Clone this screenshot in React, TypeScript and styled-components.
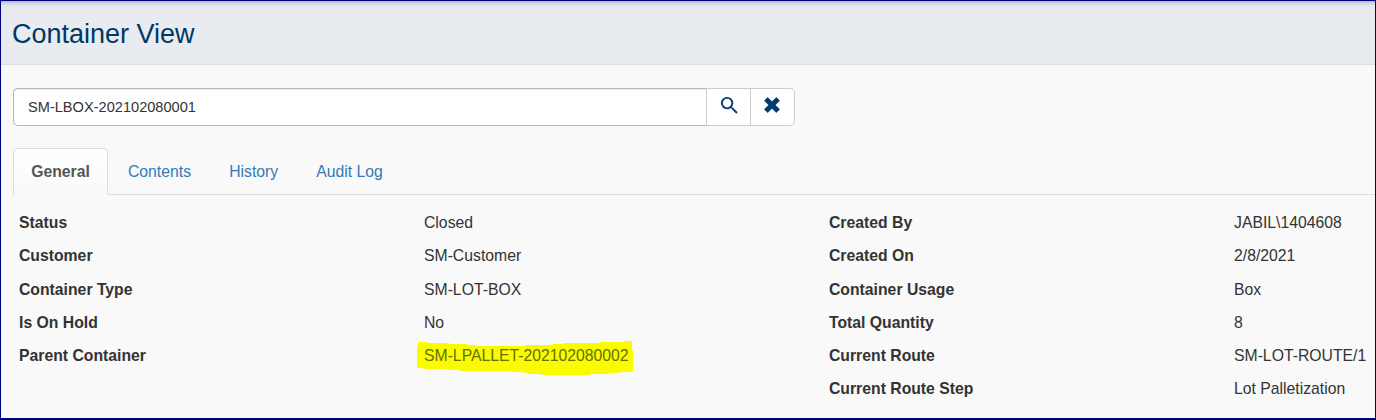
import React from 'react';
import styled, { createGlobalStyle } from 'styled-components';

const GlobalStyle = createGlobalStyle`
  * { box-sizing: border-box; }
  body {
    margin: 0;
    background: #f9f9f9;
    color: #333;
    font-family: "Liberation Sans", Arial, sans-serif;
    font-size: 15.75px;
  }
`;

const Page = styled.div`
  width: 1376px;
  height: 420px;
  overflow: hidden;
  border-bottom: 1px solid #000;
`;

const Frame = styled.div`
  display: flex;
  flex-direction: column;
  height: 419px;
  overflow: hidden;
  background: #f9f9f9;
  border: 1px solid #000080;
`;

const Header = styled.header`
  display: flex;
  align-items: center;
  flex: none;
  height: 64px;
  padding: 2px 0 0 11px;
  background: linear-gradient(#b4b7bd, #cfd2d8 2px, #dfe2e7 4px, #e8ebf0 7px);
  border-bottom: 1px solid #d9dfe8;
`;

const Title = styled.h1`
  margin: 0;
  color: #003865;
  font-size: 27px;
  font-weight: 400;
  line-height: 32px;
`;

const SearchGroup = styled.div`
  display: flex;
  flex: none;
  width: 782px;
  height: 38px;
  margin: 23px 0 22px 12px;
`;

const SearchInput = styled.input`
  flex: 1;
  min-width: 0;
  padding: 0 14px;
  border: 1px solid #b5b5b5;
  border-right-color: #ccc;
  border-radius: 5px 0 0 5px;
  background: #fff;
  box-shadow: inset 0 1px 1px rgba(0, 0, 0, 0.075);
  color: #333;
  font: 14.6px "Liberation Sans", Arial, sans-serif;
`;

const IconButton = styled.button<{ $last?: boolean }>`
  display: flex;
  align-items: center;
  justify-content: center;
  width: 44px;
  padding: ${({ $last }) => ($last ? '0 1px 4px 0' : '0 0 4px 1px')};
  border: 1px solid #ccc;
  border-left: 0;
  border-radius: ${({ $last }) => ($last ? '0 5px 5px 0' : '0')};
  background: #fff;
  color: #003d73;
`;

const Tabs = styled.nav`
  display: flex;
  flex: none;
  height: 47px;
  margin-left: 12px;
  border-bottom: 1px solid #ddd;
`;

const Tab = styled.a<{ $active?: boolean; $width: number }>`
  display: flex;
  align-items: center;
  justify-content: center;
  width: ${({ $width }) => $width}px;
  height: 47px;
  border: ${({ $active }) => ($active ? '1px solid #ddd' : '0')};
  border-bottom: 0;
  border-radius: 5px 5px 0 0;
  background: ${({ $active }) => ($active ? 'linear-gradient(#fff, #f9f9f9)' : 'transparent')};
  color: ${({ $active }) => ($active ? '#555' : '#337ab7')};
  font-weight: ${({ $active }) => ($active ? 700 : 400)};
`;

const Details = styled.div`
  display: grid;
  grid-template-columns: 810px 540px;
  padding: 11.15px 0 0 18px;
`;

const Column = styled.dl`
  margin: 0;
  display: grid;
  grid-template-columns: 405px 405px;
  grid-auto-rows: 33.2px;
  align-content: start;
  line-height: 33.2px;
  white-space: nowrap;
`;

const Pair = styled.div`
  display: grid;
  grid-template-columns: subgrid;
  grid-column: 1 / -1;
`;

const Label = styled.dt`
  font-weight: 700;
`;

const Value = styled.dd`
  margin: 0;
`;

const Marked = styled.span`
  position: relative;
  display: inline-block;
  color: #647000;
`;

const Marker = styled.svg`
  position: absolute;
  left: -7px;
  top: 2px;
`;

const MarkedText = styled.span`
  position: relative;
`;

type Field = { label: string; value: string; marked?: boolean };

const left: Field[] = [
  { label: 'Status', value: 'Closed' },
  { label: 'Customer', value: 'SM-Customer' },
  { label: 'Container Type', value: 'SM-LOT-BOX' },
  { label: 'Is On Hold', value: 'No' },
  { label: 'Parent Container', value: 'SM-LPALLET-202102080002', marked: true },
];

const right: Field[] = [
  { label: 'Created By', value: 'JABIL\\1404608' },
  { label: 'Created On', value: '2/8/2021' },
  { label: 'Container Usage', value: 'Box' },
  { label: 'Total Quantity', value: '8' },
  { label: 'Current Route', value: 'SM-LOT-ROUTE/1' },
  { label: 'Current Route Step', value: 'Lot Palletization' },
];

function FieldList({ fields }: { fields: Field[] }) {
  return (
    <Column>
      {fields.map(({ label, value, marked }) => (
        <Pair key={label}>
          <Label>{label}</Label>
          <Value>
            {marked ? (
              <Marked>
                <Marker width="217" height="35" viewBox="0 0 217 35">
                  <path
                    fill="#fbfb00"
                    d="M1 1H11V2H32V3H50V4H59V5H109V4H135V3H146V2H183V1H208V0H215V9H216V30H214V31H202V32H191V33H173V34H124V33H111V32H106V31H95V30H43V29H31V28H7V27H0V6H1Z"
                  />
                </Marker>
                <MarkedText>{value}</MarkedText>
              </Marked>
            ) : (
              value
            )}
          </Value>
        </Pair>
      ))}
    </Column>
  );
}

export default function App() {
  return (
    <>
      <GlobalStyle />
      <Page>
        <Frame>
          <Header>
            <Title>Container View</Title>
          </Header>
          <SearchGroup>
            <SearchInput defaultValue="SM-LBOX-202102080001" aria-label="Container" />
            <IconButton aria-label="Search">
              <svg width="23" height="23" viewBox="0 0 24 24" fill="currentColor">
                <path d="M15.5 14h-.79l-.28-.27A6.47 6.47 0 0 0 16 9.5 6.5 6.5 0 1 0 9.5 16c1.61 0 3.09-.59 4.23-1.57l.27.28v.79l5 4.99L20.49 19l-4.99-5zm-6 0C7.01 14 5 11.99 5 9.5S7.01 5 9.5 5 14 7.01 14 9.5 11.99 14 9.5 14z" />
              </svg>
            </IconButton>
            <IconButton $last aria-label="Clear">
              <svg width="16" height="16" viewBox="0 0 16 16" fill="currentColor">
                <path d="M3.7.5 8 4.8 12.3.5 15.5 3.7 11.2 8l4.3 4.3-3.2 3.2L8 11.2l-4.3 4.3L.5 12.3 4.8 8 .5 3.7z" stroke="currentColor" strokeWidth=".8" strokeLinejoin="round" />
              </svg>
            </IconButton>
          </SearchGroup>
          <Tabs>
            <Tab $active $width={95}>General</Tab>
            <Tab $width={103}>Contents</Tab>
            <Tab $width={85.5}>History</Tab>
            <Tab $width={106}>Audit Log</Tab>
          </Tabs>
          <Details>
            <FieldList fields={left} />
            <FieldList fields={right} />
          </Details>
        </Frame>
      </Page>
    </>
  );
}
